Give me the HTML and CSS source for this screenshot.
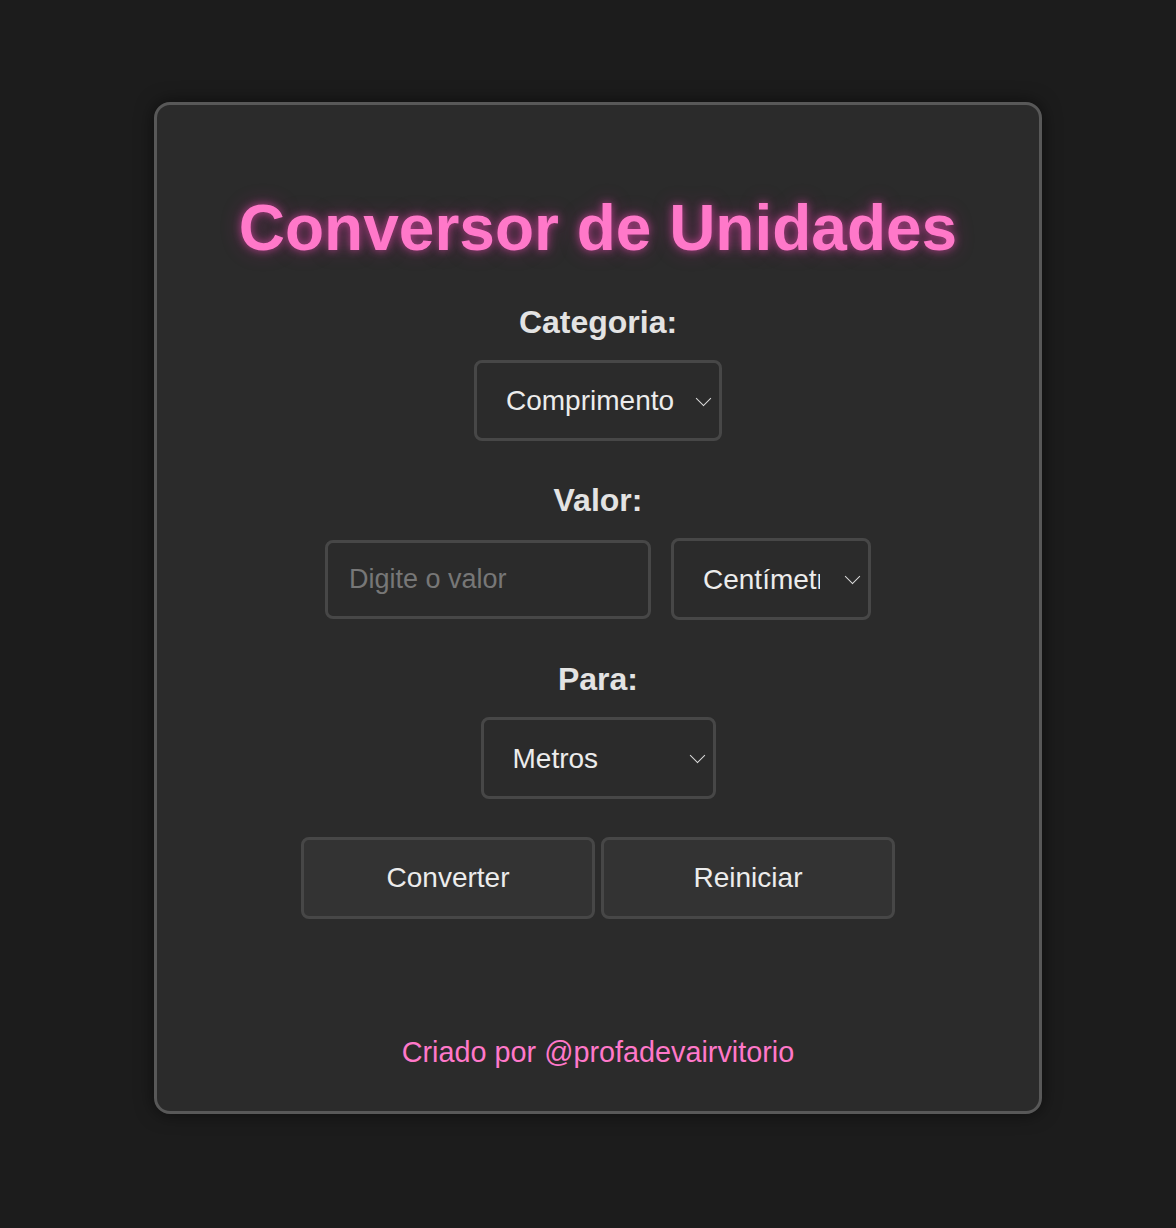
FILE: index.html
```html
<!DOCTYPE html>
<html lang="pt-BR">
<head>
<meta charset="utf-8">
<title>Conversor de Unidades</title>
<link rel="stylesheet" href="styles.css">
</head>
<body>
<main class="card">
  <h1 class="title">Conversor de Unidades</h1>
  <div class="form">
    <label class="label label-first" for="cat">Categoria:</label>
    <span class="sel-wrap">
      <select id="cat" class="sel sel-cat">
        <option>Comprimento</option>
        <option>Peso</option>
        <option>Temperatura</option>
      </select>
    </span>

    <label class="label" for="valor">Valor:</label>
    <div class="row">
      <input id="valor" class="input" type="text" placeholder="Digite o valor">
      <span class="sel-wrap">
        <select class="sel sel-unit">
          <option>Centímetros</option>
          <option>Metros</option>
          <option>Quilômetros</option>
        </select>
      </span>
    </div>

    <label class="label" for="para">Para:</label>
    <span class="sel-wrap">
      <select id="para" class="sel sel-to">
        <option>Metros</option>
        <option>Centímetros</option>
        <option>Quilômetros</option>
      </select>
    </span>

    <div class="buttons">
      <button class="btn" type="button">Converter</button>
      <button class="btn" type="button">Reiniciar</button>
    </div>
  </div>
  <p class="footer">Criado por @profadevairvitorio</p>
</main>
</body>
</html>
```

FILE: styles.css
```css
* { box-sizing: border-box; }

html, body {
  margin: 0;
  padding: 0;
  background: #1c1c1c;
}

body {
  padding: 102px 0 0 154px;
  min-height: 1228px;
  font-family: "Liberation Sans", Arial, Helvetica, sans-serif;
  color: #e6e6e6;
}

.card {
  width: 888px;
  background: #2b2b2b;
  border: 3px solid #585858;
  border-radius: 16px;
  box-shadow: 0 0 18px rgba(0, 0, 0, 0.55);
  padding: 86px 0 43px;
  display: flex;
  flex-direction: column;
  align-items: center;
}

.title {
  margin: 0;
  font-size: 64px;
  line-height: 74px;
  font-weight: 700;
  color: #ff78c9;
  text-shadow: 0 0 8px rgba(255, 80, 190, 0.6), 0 0 20px rgba(200, 40, 150, 0.4);
}

.form {
  display: flex;
  flex-direction: column;
  align-items: center;
}

.label {
  display: block;
  font-size: 32px;
  line-height: 36px;
  font-weight: 700;
  color: #e3e3e3;
  margin-top: 41px;
  margin-bottom: 20px;
}

.label-first { margin-top: 39px; }

.sel-wrap {
  position: relative;
  display: inline-block;
}

.sel-wrap::after {
  content: "";
  position: absolute;
  right: 13px;
  top: 50%;
  width: 10px;
  height: 10px;
  margin-top: -8px;
  border-right: 1.6px solid #dcdcdc;
  border-bottom: 1.6px solid #dcdcdc;
  transform: rotate(45deg);
  pointer-events: none;
}

.sel {
  appearance: none;
  -webkit-appearance: none;
  height: 82px;
  background: #2b2b2b;
  color: #ececec;
  border: 3px solid #474747;
  border-radius: 8px;
  font-family: "Liberation Sans", Arial, Helvetica, sans-serif;
  font-size: 28px;
  padding: 0 50px 0 29px;
  margin: 0;
  outline: none;
}

.sel-cat { width: 248px; height: 81px; padding-right: 38px; }
.sel-unit { width: 200px; padding-right: 48px; }
.sel-to { width: 235px; }

.row {
  display: flex;
  align-items: center;
  gap: 20px;
}

.input {
  width: 326px;
  height: 79px;
  background: #2b2b2b;
  border: 3px solid #474747;
  border-radius: 8px;
  color: #ececec;
  font-family: "Liberation Sans", Arial, Helvetica, sans-serif;
  font-size: 27px;
  padding: 0 21px;
  margin: 0;
  outline: none;
}

.input::placeholder { color: #777777; }

.buttons {
  display: flex;
  gap: 6px;
  margin-top: 38px;
}

.btn {
  width: 294px;
  height: 82px;
  background: #333333;
  border: 3px solid #474747;
  border-radius: 8px;
  color: #ececec;
  font-family: "Liberation Sans", Arial, Helvetica, sans-serif;
  font-size: 28px;
  padding: 0;
  margin: 0;
}

.footer {
  margin: 117px 0 0;
  font-size: 28.8px;
  line-height: 32px;
  color: #ff78c9;
}
```
